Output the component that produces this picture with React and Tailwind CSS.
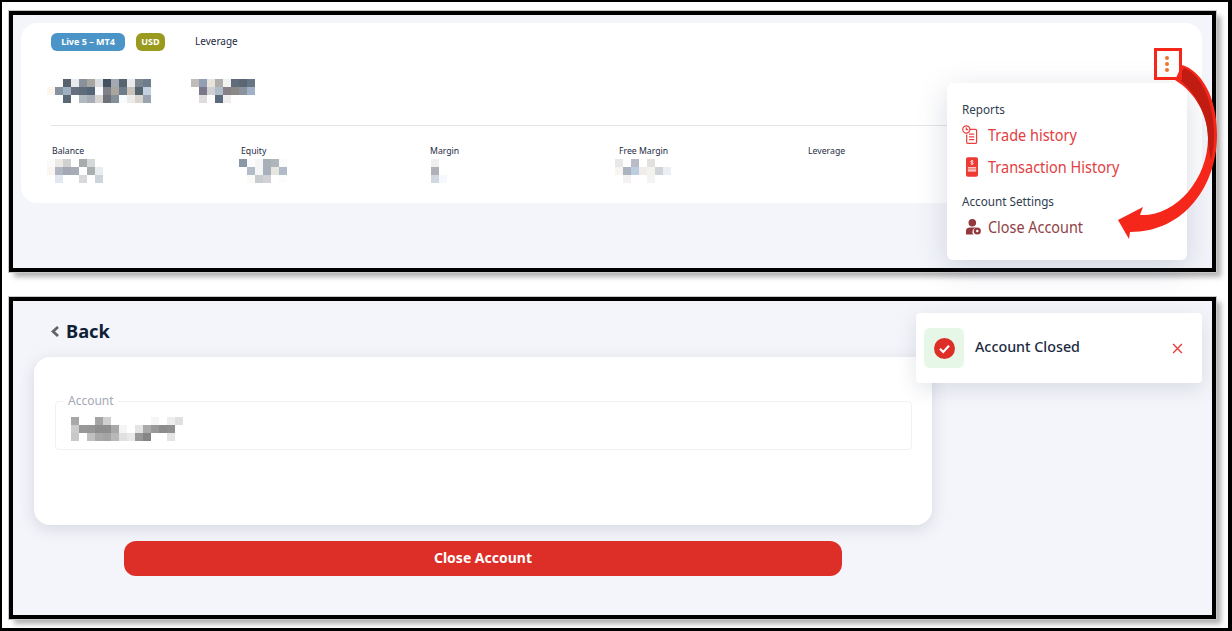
import React from "react";

const n = null;

const mosaics = {
  name: [
    [n, n, "#56636f", "#e8eaec", "#87929c", "#a8a6a0", "#dcdde0", "#425062", "#a3a9b3", "#586470", "#e8eaec", "#7c8690", "#6f7c8c"],
    ["#fdf6ec", "#8592a0", "#9fb0c0", "#687080", "#5f6b7a", "#556578", "#f8fafc", "#7d8088", "#a8a69e", "#6f7c8c", "#c8c2b8", "#566470", "#c2d0e0"],
    [n, n, "#5a6775", n, "#b0b8c0", "#a8adb5", "#d8d6d2", "#6c7078", "#858f9a", "#f8fcfe", "#ebebe9", "#d8d4ce", "#99a4b0"],
  ],
  number: [
    ["#c0bdb8", "#909fb5", "#e8e4dc", "#b0aeac", "#f2f2f0", "#606c7c", "#5a6674", "#687484"],
    [n, "#7a7888", "#d0d0d4", "#b0bcc8", "#858088", "#8c8888", "#8a929c", "#a0b0c8"],
    [n, "#dfdcdc", n, "#5a6a7c", "#f0eeec", n, n, n],
  ],
  balance: [
    ["#fafafa", "#ece9e6", "#cfd0d2", n, "#a8acac", "#d6d8d8", n],
    ["#faf5ee", "#b0b6c2", "#a4a8b4", "#a8adb5", n, "#a8b0b0", "#e8edee"],
    [n, "#e2e8f0", n, n, "#d8d8dc", n, "#ccd4dc"],
  ],
  equity: [
    ["#8a97a4", "#fafbfa", "#f4f5f4", "#a8b0b8", "#b0b5ba", "#fbfbfb"],
    [n, "#b4bcc8", "#f4f6f6", "#a8b0bc", "#e8e6e0", "#b0bac8"],
    [n, "#fafaf6", "#c8cccf", "#d0d2d6", n, "#fbfcfc"],
  ],
  margin: [
    ["#eeeeee", n],
    ["#b0b0b8", n],
    ["#d2d8e2", "#f5f8fc"],
  ],
  free: [
    ["#e8e8e8", n, "#b8bcc8", n, "#e2e0de", n, n],
    ["#f8f5f0", "#adb2c0", "#bccde0", "#f0ecea", "#f4f2ee", "#d0d4d6", "#ecf0f4"],
    [n, "#f4f2f0", n, n, "#f2f4f2", n, n],
  ],
  account: [
    ["#a8a8a8", n, n, "#a4a4a4", "#d0d0d0", n, n, n, n, n, "#f6f6f6", n, "#eeeeee", "#e0e0e0"],
    ["#cccccc", "#989898", "#969696", "#8e8e8e", "#8e8e8e", "#a8a8a8", "#f4f4f4", n, "#e4e4e4", "#aaaaaa", "#999999", "#8c8c8c", "#909090", n],
    ["#c8c8c8", n, "#c0c0c0", "#a8a8a8", "#a4a4a4", "#b8b8b8", "#e0e0e0", "#e8e8e8", "#989898", "#858585", n, n, "#e4e4e4", n],
  ],
};

// blurred-out values in the screenshot, drawn cell by cell
const Mosaic = ({ rows, className }) => (
  <svg
    width={rows[0].length * 8}
    height={24}
    viewBox={`0 0 ${rows[0].length * 8} 24`}
    shapeRendering="crispEdges"
    className={className}
  >
    {rows.map((row, y) =>
      row.map((c, x) => c && <rect key={`${x}-${y}`} x={x * 8} y={y * 8} width="8" height="8" fill={c} />)
    )}
  </svg>
);

const TradeIcon = () => (
  <svg width="16" height="20" viewBox="0 0 17 21" fill="none" stroke="#e8403f" strokeWidth="1.3">
    <path d="M7 4.5h7.2a1.3 1.3 0 0 1 1.3 1.3v12.4a1.3 1.3 0 0 1-1.3 1.3H6.3A1.3 1.3 0 0 1 5 18.2V10" />
    <circle cx="4.6" cy="4.6" r="3.8" fill="#fff" />
    <path d="M4.6 2.6v2.2h2M7.5 9.5h5.5M7.5 12.5h5.5M7.5 15.5h5.5" />
  </svg>
);

const TransactionIcon = () => (
  <svg width="12" height="20" viewBox="0 0 13 21">
    <rect width="13" height="21" rx="2" fill="#ee3a35" />
    <rect x="2" y="10.5" width="9" height="5" fill="#f7c4c2" />
    <path d="M2 12.5h9" stroke="#ee3a35" strokeWidth="0.7" />
    <path d="M6.5 3v5M8 4.2c-.5-.6-2.8-.8-2.9.4-.1 1.2 3 .9 2.9 2.1-.1 1.1-2.4 1-3 .3" fill="none" stroke="#fff" strokeWidth="0.8" />
  </svg>
);

const CloseUserIcon = () => (
  <svg width="15" height="16" viewBox="0 0 15 16" fill="#93383c">
    <circle cx="6.3" cy="3.8" r="3.8" />
    <path d="M0 15.5v-3.7C0 9.6 1.8 8.4 3.8 8.4h5c.6 0 1 .1 1.4.3a4 4 0 0 0-2.6 6.8H0z" />
    <circle cx="11.3" cy="12" r="3.6" />
    <circle cx="11.3" cy="12" r="1.2" fill="#fff" />
  </svg>
);

const stats = [
  { label: "Balance", rows: mosaics.balance, shift: "ml-[-5px]" },
  { label: "Equity", rows: mosaics.equity, shift: "ml-[-2px]" },
  { label: "Margin", rows: mosaics.margin, shift: "ml-px" },
  { label: "Free Margin", rows: mosaics.free, shift: "ml-[-4px]" },
  { label: "Leverage", rows: null },
];

const App = () => (
  <div
    className="w-[1232px] h-[631px] overflow-hidden bg-white border-t-2 border-l-2 border-r-4 border-b-[3px] border-black pl-[7px] pt-[9px] text-[#1d2a3f]"
    style={{ fontFamily: '"Noto Sans", sans-serif' }}
  >
    {/* top panel: account card with open menu */}
    <div className="relative w-[1207px] h-[261px] border-4 border-black bg-[#f4f5fa] pl-2 pt-2 shadow-[5px_5px_5px_rgba(0,0,0,0.3)] outline outline-[#c9c9c9]">
      <div className="w-[1181px] h-[180px] rounded-2xl bg-white pl-[30px] pt-[10px]">
        <div className="flex items-center h-[18px]">
          <span className="flex items-center justify-center w-[74px] h-[18px] rounded-md bg-[#4a94c8] text-white text-[9px] font-bold">
            Live 5 – MT4
          </span>
          <span className="flex items-center justify-center w-[29px] h-[18px] ml-[11px] rounded-md bg-[#9a9a1e] text-white text-[9px] font-bold">
            USD
          </span>
          <span className="ml-[30px] -mt-[2px] text-[10px] leading-none">Leverage</span>
        </div>
        <div className="flex mt-[28px] ml-[-4px]">
          <Mosaic rows={mosaics.name} />
          <Mosaic rows={mosaics.number} className="ml-[40px]" />
        </div>
        <div className="w-[1121px] mt-[22px] border-t border-[#e4e4e4]" />
        <div className="grid grid-cols-[repeat(6,189px)] mt-[18px] ml-px">
          {stats.map((s) => (
            <div key={s.label}>
              <div className="text-[8.7px] leading-[15px]">{s.label}</div>
              {s.rows && <Mosaic rows={s.rows} className={s.shift} />}
            </div>
          ))}
        </div>
      </div>

      {/* dropdown menu */}
      <div className="absolute left-[934px] top-[68px] w-[240px] h-[177px] rounded-md bg-white px-[15px] pt-[16px] shadow-[0_8px_30px_rgba(80,90,130,0.22)]">
        <div className="text-[11.7px] leading-[20px] text-[#2f3d50]">Reports</div>
        <div className="flex items-center h-[32px] text-[#e2403f]">
          <span className="w-[26px]"><TradeIcon /></span>
          <span className="text-[16px] origin-left scale-x-[0.905]">Trade history</span>
        </div>
        <div className="flex items-center h-[32px] text-[#e2403f]">
          <span className="w-[26px] pl-[4px]"><TransactionIcon /></span>
          <span className="text-[16px] origin-left scale-x-[0.905]">Transaction History</span>
        </div>
        <div className="text-[11.7px] leading-[21px] mt-[8px] text-[#2f3d50]">Account Settings</div>
        <div className="flex items-center h-[30px] text-[#8f4146]">
          <span className="w-[26px] pl-[4px]"><CloseUserIcon /></span>
          <span className="text-[16px] origin-left scale-x-[0.9]">Close Account</span>
        </div>
      </div>

      {/* annotation arrow, coordinates are relative to the panel */}
      <svg className="absolute left-[1087px] top-[44px]" width="125" height="190" viewBox="1100 59 125 190">
        <path
          d="M1182 65C1200 70 1217 95 1217 135C1217 185 1185 232 1130 232L1129 239L1118 220L1143 207L1140 215C1175 217 1208 180 1208 138C1208 115 1195 92 1175 80Z"
          fill="#f5261a"
        />
        <path
          d="M1184 68C1200 74 1214 100 1214 135C1214 145 1213 152 1211 160C1209 150 1208 145 1208 138C1208 115 1195 92 1178 78Z"
          fill="#c01c12"
        />
      </svg>

      {/* highlight round the kebab button */}
      <div className="absolute left-[1141px] top-[33px] flex w-[28px] h-[32px] flex-col items-center justify-center gap-[2px] border-[3px] border-[#f5261a] pr-[2px]">
        <span className="w-[4px] h-[4px] rounded-full bg-[#f0732a]" />
        <span className="w-[4px] h-[4px] rounded-full bg-[#f0732a]" />
        <span className="w-[4px] h-[4px] rounded-full bg-[#f0732a]" />
      </div>
    </div>

    {/* bottom panel: close account form */}
    <div className="relative w-[1207px] h-[322px] mt-[25px] border-4 border-black bg-[#f4f5fa] pl-[21px] pt-[16px] shadow-[5px_5px_5px_rgba(0,0,0,0.3)] outline outline-[#c9c9c9]">
      <div className="flex items-center h-[28px] ml-[17px]">
        <svg width="8" height="11" viewBox="0 0 8 11" fill="none" stroke="#5f6368" strokeWidth="2.8">
          <path d="M7 1 2 5.5 7 10" />
        </svg>
        <span className="ml-[7px] text-[18.3px] font-bold text-[#0f1f38]">Back</span>
      </div>
      <div className="w-[898px] mt-[12px]">
        <div className="h-[168px] rounded-2xl bg-white pl-[21px] pr-[20px] pt-[44px] shadow-[0_4px_16px_rgba(60,70,100,0.16)]">
          <div className="relative h-[49px] rounded border border-[#f1f1f3] pl-[15px] pt-[15px]">
            <span className="absolute left-[8px] top-[-9px] bg-white px-[4px] text-[12px] leading-[16px] text-[#a3a9b5]">
              Account
            </span>
            <Mosaic rows={mosaics.account} />
          </div>
        </div>
        <button className="flex items-center justify-center mx-auto mt-[16px] w-[718px] h-[35px] pb-[2px] rounded-xl bg-[#dd2e27] text-white text-[14px] font-bold">
          Close Account
        </button>
      </div>

      {/* toast */}
      <div className="absolute left-[903px] top-[12px] flex items-center w-[286px] h-[70px] rounded bg-white pl-[8px] shadow-[0_6px_20px_rgba(60,70,100,0.14)]">
        <div className="flex items-center justify-center w-[40px] h-[40px] rounded-md bg-[#e6f7e8]">
          <svg width="21" height="21" viewBox="0 0 21 21" fill="none">
            <circle cx="10.5" cy="10.5" r="10.5" fill="#dd2e27" />
            <path d="M6 10.8 9.2 14 15 7.8" stroke="#fff" strokeWidth="2.2" />
          </svg>
        </div>
        <span className="ml-[11px] pb-[2px] text-[14.3px] font-medium text-[#1d2a3f]">Account Closed</span>
        <svg className="ml-[92px]" width="11" height="11" viewBox="0 0 10 10" stroke="#e8403f" strokeWidth="1.3">
          <path d="M1 1 9 9M9 1 1 9" />
        </svg>
      </div>
    </div>
  </div>
);

export default App;
